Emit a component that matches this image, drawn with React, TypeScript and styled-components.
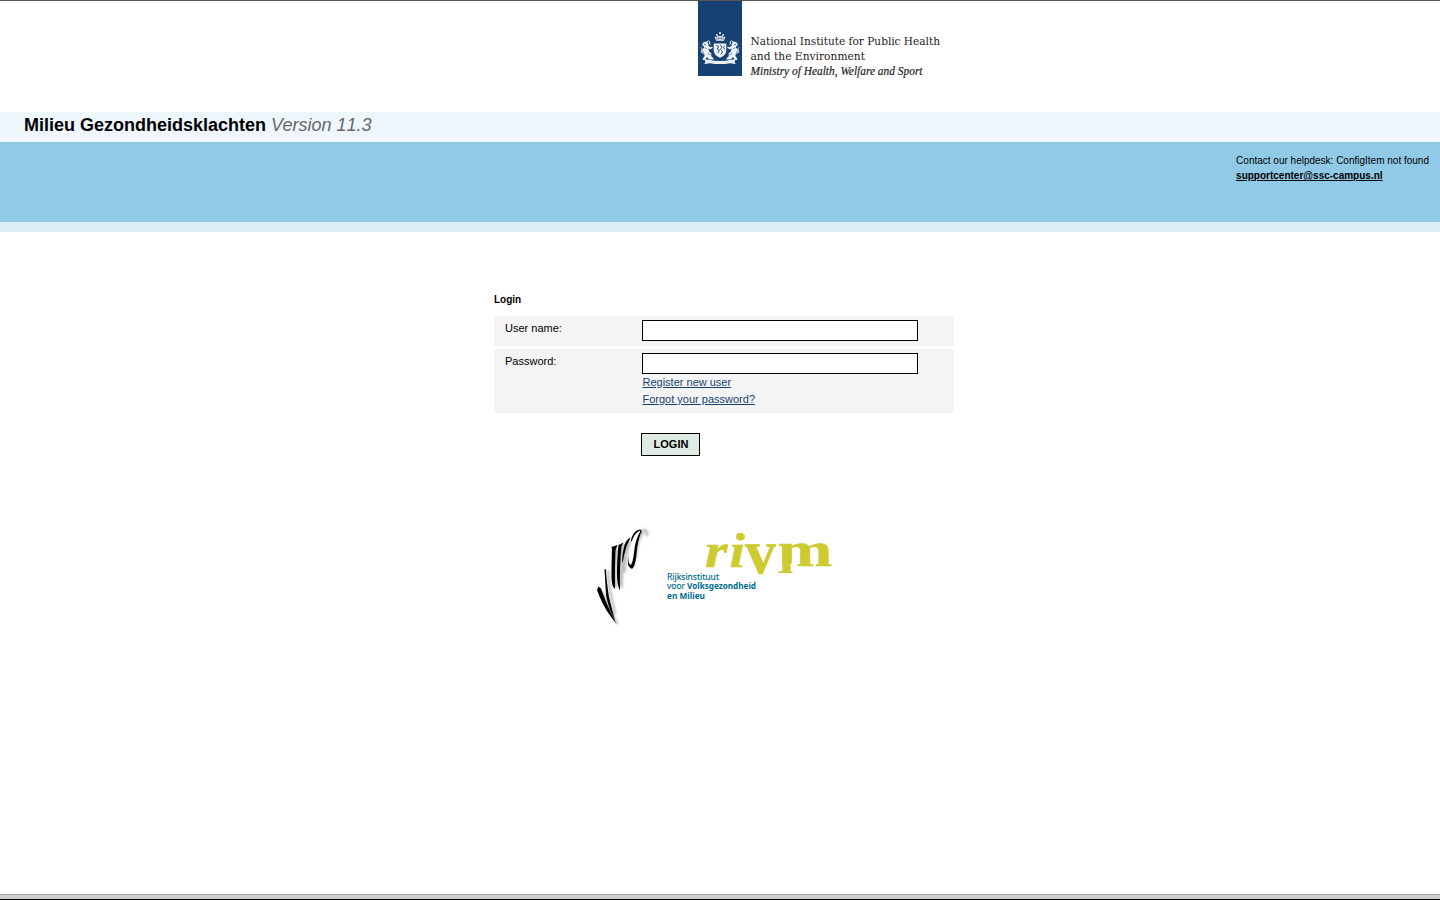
import React from "react";
import styled, { createGlobalStyle } from "styled-components";

const GlobalStyle = createGlobalStyle`
  * { box-sizing: border-box; }
  body {
    margin: 0;
    background: #fff;
    color: #000;
    font-family: "Liberation Sans", Arial, sans-serif;
    font-size: 11px;
  }
`;

const Page = styled.div`
  display: flex;
  flex-direction: column;
  height: 900px;
  border-top: 1px solid #555;
  overflow: hidden;
`;

const Header = styled.header`
  height: 111px;
  padding-left: 698px;
  flex: none;
`;

const TitleBar = styled.div`
  flex: none;
  height: 30px;
  padding: 2px 24px 0;
  background: linear-gradient(#ecf7fb, #eff6fe 12px);
`;

const Title = styled.h1`
  margin: 0;
  font-size: 18px;
  line-height: 22px;
`;

const Version = styled.em`
  font-weight: normal;
  color: #666;
`;

const VersionNumber = styled.span`
  font-kerning: none;
`;

const Banner = styled.div`
  flex: none;
  display: flex;
  justify-content: flex-end;
  height: 90px;
  padding: 11px 11px 0 0;
  background: #90cae7;
  border-bottom: 10px solid #dceff8;
`;

const Helpdesk = styled.div`
  font-size: 10px;
  line-height: 15px;
`;

const SupportLink = styled.a`
  display: block;
  font-weight: bold;
  color: #000;
  text-decoration: underline;
`;

const Main = styled.main`
  flex: 1;
  width: 460px;
  margin-left: 494px;
  padding-top: 61px;
`;

const FormTitle = styled.h2`
  margin: 0 0 10px;
  font-size: 10px;
  line-height: 13px;
`;

const FormRow = styled.div<{ $height: number }>`
  display: flex;
  height: ${(p) => p.$height}px;
  margin-bottom: 3px;
  padding: 4px 0 0 11px;
  background: #f4f4f4;
`;

const Label = styled.label`
  width: 137px;
  padding-top: 1px;
  line-height: 15px;
`;

const Field = styled.div`
  display: flex;
  flex-direction: column;
  align-items: flex-start;
`;

const Input = styled.input`
  width: 276px;
  height: 21px;
  padding: 1px 4px;
  border: 1px solid #000;
  border-radius: 0;
  background: #fff;
  font: inherit;
  outline: none;
`;

const FormLink = styled.a`
  padding-left: 0.5px;
  color: #154273;
  line-height: 17px;
  text-decoration: underline;
`;

const LoginButton = styled.button`
  display: block;
  width: 59px;
  height: 23px;
  margin: 20px 0 0 147px;
  padding: 0 0 2px 1px;
  border: 1px solid #000;
  border-radius: 0;
  background: #deebe2;
  color: #000;
  font: bold 11px "Liberation Sans", Arial, sans-serif;
`;

const PartnerLogos = styled.div`
  margin: 68px 0 0 101px;
  height: 108px;
`;

const Logo = styled.svg`
  display: block;
  overflow: visible;
`;

const Footer = styled.footer`
  flex: none;
  height: 6px;
  background: #ccc;
  border-top: 1px solid #aaa;
  border-bottom: 1px solid #000;
`;

const Lion = () => (
  <g>
    <path d="M4 44.5l1.5-2.2 3-.8 1.8 2 .1 2.4 2.6 1.4 1.4-.9.2 1.7-2 1.2-2.1-.6.7 2.8 2.2 2.1-.3 2.4 2.1 1.9.6 1.7H11l-1.5-2.3-1.9 1.2.8 1.3-3.7.2.3-1.8 1.5-2.2-.4-3.2-1.8-1.3.1-2.2 2-1.9z" />
    <path d="M8.6 42.2l2-1.4 1.2 1-.2 2.2 1.1.8M7 53.4l-2.8-.4-1-2.2 1.3-1.9-1.8-1.5" fill="none" stroke="#fff" strokeWidth="1" />
    <path d="M7.3 47.6l1.2 1.5M10 53l2 2M6 44l2 1" stroke="#154273" strokeWidth=".7" />
  </g>
);

const GovernmentLogo = () => (
  <Logo width="250" height="90" viewBox="0 1 250 90">
    <rect y="1" width="44" height="75" fill="#154273" />
    <g fill="#fff" opacity=".92">
      <Lion />
      <g transform="translate(44 0) scale(-1 1)"><Lion /></g>
      <path d="M16.4 36.4l2.2 1.1 1-2.3 1.5 1.5.9-1.6.9 1.6 1.5-1.5 1 2.3 2.2-1.1-1.7 4.4h-7.8z" />
      <circle cx="22" cy="33" r="1.1" />
      <circle cx="18.8" cy="35" r=".9" />
      <circle cx="25.2" cy="35" r=".9" />
      <path d="M15.7 43.4h12.6v7.5q-.6 4.7-6.3 6.8-5.7-2.1-6.3-6.8z" />
      <path d="M6.2 59.3l4.2.4q11.6 2.4 23.2 0l4.2-.4-1.2 2 1 2.6-5.5-.7q-10.1 1.7-20.2 0l-5.5.7 1-2.6z" />
    </g>
    <g stroke="#154273" fill="none">
      <path d="M18 39.2q4-1.2 8 0M20 36.8l.6 1.5M24 36.8l-.6 1.5" strokeWidth=".7" />
      <path d="M18.2 45.3l2.5 1.1-1.6 2.5 2.2 1.1-1.3 3.2M22.3 45l1.7 2.2-1.5 2.2 2.1 2-1.6 2.9M26.7 45.7l-1.2 1.6 1.2 2.2" strokeWidth=".9" />
    </g>
    <g fill="#222" fontFamily='"DejaVu Serif Condensed", "DejaVu Serif", serif' fontSize="11.5">
      <text x="52.5" y="45" textLength="189.5" lengthAdjust="spacingAndGlyphs">National Institute for Public Health</text>
      <text x="52.5" y="60" textLength="114.5" lengthAdjust="spacingAndGlyphs">and the Environment</text>
      <text x="52.5" y="75" fontSize="13" fontStyle="italic" fontFamily='"Liberation Serif", serif' stroke="#222" strokeWidth=".2" textLength="172" lengthAdjust="spacingAndGlyphs">Ministry of Health, Welfare and Sport</text>
    </g>
  </Logo>
);

const RivmLogos = () => (
  <Logo width="240" height="108" viewBox="595 524 240 108">
    <defs>
      <filter id="soft" x="-20%" y="-20%" width="140%" height="140%">
        <feGaussianBlur stdDeviation=".8" />
      </filter>
    </defs>
    <g fill="none" stroke="#aaa" strokeLinecap="round" filter="url(#soft)" opacity=".75">
      <path d="M602 592q7 17 15 31M608 571q1 20 7 42" strokeWidth="2.5" />
      <path d="M616 549q-2 20-1 37M623 546q-2 22-2 40M629 542q-5 16-5 29" strokeWidth="4" />
      <path d="M643 532q-5 6-7 19-1 12-4 15M644 530q4 1 3 5" strokeWidth="3" />
    </g>
    <g fill="#000">
      <path d="M597 590l1.5-3.5 2.5 2q6 17 15.5 35.5-11-13-17-27.5z" />
      <path d="M604.5 569.5l1.3-.5q1.2 16 3.2 28l6 24q-7-14-9-26z" />
      <path d="M612 549l-.5-2 6-2-2 5q-1 19-.5 39-3.5-3-3.5-12 0-16 .5-28z" />
      <path d="M618.5 545l5-2.5-2 4q-2 19-1.5 44-3-5-3-17 0-16 1.5-28.5z" />
      <path d="M624.5 545q2-6 6-7.5-4.5 8-6.5 18-1 7-2 7 0-8 2.5-17.5z" />
      <path d="M628.5 555q-1 9 2.5 10 2-3 3-12 1-13 6-21 1-2-1-1-5 3-7 10l-1.3.5q2-11 8.8-12 4 0 1 4.5-3 8-4 20-1 12-4.5 15-6-2-3.5-14z" />
    </g>
    <g fill="#cdcb30" stroke="#cdcb30" strokeWidth=".5" fontFamily='"Liberation Serif", serif' fontWeight="bold">
      <text transform="translate(705 566.5) scale(1.2 1)" fontSize="48" fontStyle="italic">r</text>
      <text transform="translate(729.5 566.5) scale(1.15 1)" fontSize="48" fontStyle="italic">i</text>
      <text transform="translate(745 572.5) scale(.98 1)" fontSize="63">v</text>
      <text transform="translate(777.5 566.3) scale(1.37 1)" fontSize="48">m</text>
    </g>
    {/* lengthened first leg of the m */}
    <path d="M777 563.5h17.8v4h-17.8z" fill="#fff" />
    <path d="M782.3 562.5h8.2v8.5l2 .7v1.3h-14.3v-1.3l4.1-.7z" fill="#cdcb30" />
    <g fill="#006c91" fontFamily='"Noto Sans", sans-serif' fontSize="8">
      <text x="667" y="580" stroke="#006c91" strokeWidth=".15" textLength="52" lengthAdjust="spacingAndGlyphs">Rijksinstituut</text>
      <text x="667" y="589" stroke="#006c91" strokeWidth=".15" textLength="18" lengthAdjust="spacingAndGlyphs">voor</text>
      <text x="687" y="589" fontWeight="bold" textLength="69" lengthAdjust="spacingAndGlyphs">Volksgezondheid</text>
      <text x="667" y="599" fontWeight="bold" textLength="38" lengthAdjust="spacingAndGlyphs">en Milieu</text>
    </g>
  </Logo>
);

export default function App() {
  return (
    <Page>
      <GlobalStyle />
      <Header>
        <GovernmentLogo />
      </Header>
      <TitleBar>
        <Title>
          Milieu Gezondheidsklachten{" "}
          <Version>
            Version <VersionNumber>11.3</VersionNumber>
          </Version>
        </Title>
      </TitleBar>
      <Banner>
        <Helpdesk>
          Contact our helpdesk: ConfigItem not found
          <SupportLink href="#">supportcenter@ssc-campus.nl</SupportLink>
        </Helpdesk>
      </Banner>
      <Main>
        <FormTitle>Login</FormTitle>
        <FormRow $height={30}>
          <Label htmlFor="user">User name:</Label>
          <Field>
            <Input id="user" type="text" />
          </Field>
        </FormRow>
        <FormRow $height={64}>
          <Label htmlFor="password">Password:</Label>
          <Field>
            <Input id="password" type="password" />
            <FormLink href="#">Register new user</FormLink>
            <FormLink href="#">Forgot your password?</FormLink>
          </Field>
        </FormRow>
        <LoginButton type="button">LOGIN</LoginButton>
        <PartnerLogos>
          <RivmLogos />
        </PartnerLogos>
      </Main>
      <Footer />
    </Page>
  );
}
